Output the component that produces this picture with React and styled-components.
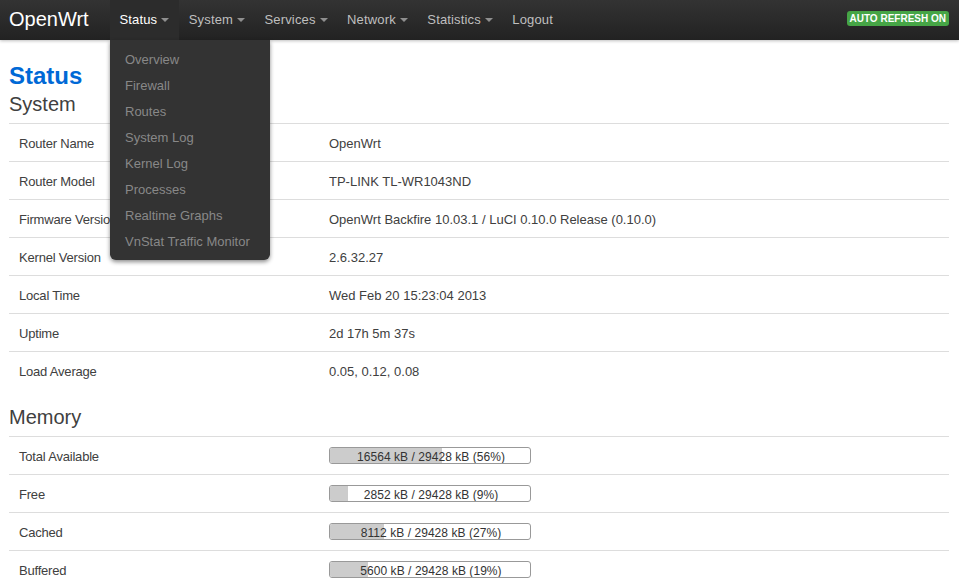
import React from 'react'
import styled, { createGlobalStyle } from 'styled-components'

const Global = createGlobalStyle`
  html, body {
    margin: 0;
    height: 100%;
    overflow: hidden;
    background: #fff;
    font-family: "Liberation Sans", Arial, sans-serif;
    font-size: 13px;
    color: #404040;
  }
`

const Navbar = styled.div`
  height: 40px;
  display: flex;
  align-items: stretch;
  padding: 0 10px 0 9px;
  background: linear-gradient(#333, #222);
  box-shadow: 0 1px 3px rgba(0, 0, 0, 0.25);
`

const Brand = styled.div`
  font-size: 20px;
  line-height: 38px;
  color: #fff;
  width: 101px;
`

const Menu = styled.div`
  display: flex;
  flex: 1;
`

const MenuItem = styled.div`
  position: relative;
  display: flex;
  align-items: center;
  gap: 4px;
  padding: 0 10px 2px 9.5px;
  letter-spacing: 0.15px;
  color: ${p => (p.$active ? '#fff' : '#bfbfbf')};
  background: ${p => (p.$active ? '#2c2c2c' : 'transparent')};
`

const Caret = styled.span`
  width: 0;
  height: 0;
  margin-top: 1px;
  border-left: 4px solid transparent;
  border-right: 4px solid transparent;
  border-top: 4px solid #8f8f8f;
`

const Dropdown = styled.div`
  position: absolute;
  top: 40px;
  left: 0;
  width: 160px;
  box-sizing: border-box;
  padding: 7px 0 5px;
  background: #333;
  border-radius: 0 0 6px 6px;
  box-shadow: 0 2px 4px rgba(0, 0, 0, 0.45);
  letter-spacing: 0;
  z-index: 5;
`

const DropdownItem = styled.div`
  height: 26px;
  line-height: 26px;
  padding-left: 15px;
  color: #888;
  white-space: nowrap;
`

const Badge = styled.div`
  align-self: flex-start;
  margin-top: 11px;
  padding: 0 3px;
  height: 15px;
  line-height: 15px;
  font-size: 10px;
  font-weight: bold;
  color: #fff;
  background: #46a546;
  border-radius: 3px;
`

const Content = styled.div`
  padding: 21px 10px 0 9px;
`

const Title = styled.h1`
  margin: 0 0 2px;
  font-size: 24px;
  line-height: 29px;
  font-weight: bold;
  color: #0069d6;
`

const SectionTitle = styled.h2`
  margin: 0;
  font-size: 20px;
  font-weight: normal;
  line-height: 24px;
  padding-bottom: 7px;
`

const Section = styled.div`
  margin-bottom: ${p => p.$gap || 0}px;
`

const Row = styled.div`
  display: grid;
  grid-template-columns: 320px 1fr;
  height: 37px;
  align-items: center;
  border-top: 1px solid #ddd;
`

const Label = styled.div`
  padding: 2px 0 0 10px;
  letter-spacing: -0.2px;
`

const Value = styled.div`
  padding-top: 2px;
`

const Bar = styled.div`
  position: relative;
  width: 200px;
  height: 15px;
  border: 1px solid #999;
  border-radius: 3px;
  overflow: hidden;
  text-align: center;
  font-size: 12px;
  letter-spacing: 0.05px;
  line-height: 19px;
  color: #333;
  white-space: nowrap;
`

const BarFill = styled.div`
  position: absolute;
  top: 0;
  left: 0;
  bottom: 0;
  background: #ccc;
`

const BarText = styled.span`
  position: relative;
  left: 1px;
`

const menu = ['Status', 'System', 'Services', 'Network', 'Statistics']
const statusItems = [
  'Overview',
  'Firewall',
  'Routes',
  'System Log',
  'Kernel Log',
  'Processes',
  'Realtime Graphs',
  'VnStat Traffic Monitor',
]
const system = [
  ['Router Name', 'OpenWrt'],
  ['Router Model', 'TP-LINK TL-WR1043ND'],
  ['Firmware Version', 'OpenWrt Backfire 10.03.1 / LuCI 0.10.0 Release (0.10.0)'],
  ['Kernel Version', '2.6.32.27'],
  ['Local Time', 'Wed Feb 20 15:23:04 2013'],
  ['Uptime', '2d 17h 5m 37s'],
  ['Load Average', '0.05, 0.12, 0.08'],
]
const memory = [
  ['Total Available', '16564 kB / 29428 kB (56%)', 56],
  ['Free', '2852 kB / 29428 kB (9%)', 9],
  ['Cached', '8112 kB / 29428 kB (27%)', 27],
  ['Buffered', '5600 kB / 29428 kB (19%)', 19],
]

export default function App() {
  return (
    <>
      <Global />
      <Navbar>
        <Brand>OpenWrt</Brand>
        <Menu>
          {menu.map(name => (
            <MenuItem key={name} $active={name === 'Status'}>
              {name}
              <Caret />
              {name === 'Status' && (
                <Dropdown>
                  {statusItems.map(item => (
                    <DropdownItem key={item}>{item}</DropdownItem>
                  ))}
                </Dropdown>
              )}
            </MenuItem>
          ))}
          <MenuItem>Logout</MenuItem>
        </Menu>
        <Badge>AUTO REFRESH ON</Badge>
      </Navbar>
      <Content>
        <Title>Status</Title>
        <Section $gap={16}>
          <SectionTitle>System</SectionTitle>
          {system.map(([label, value]) => (
            <Row key={label}>
              <Label>{label}</Label>
              <Value>{value}</Value>
            </Row>
          ))}
        </Section>
        <Section>
          <SectionTitle>Memory</SectionTitle>
          {memory.map(([label, text, pct]) => (
            <Row key={label}>
              <Label>{label}</Label>
              <Bar>
                <BarFill style={{ width: `${pct}%` }} />
                <BarText>{text}</BarText>
              </Bar>
            </Row>
          ))}
        </Section>
      </Content>
    </>
  )
}
